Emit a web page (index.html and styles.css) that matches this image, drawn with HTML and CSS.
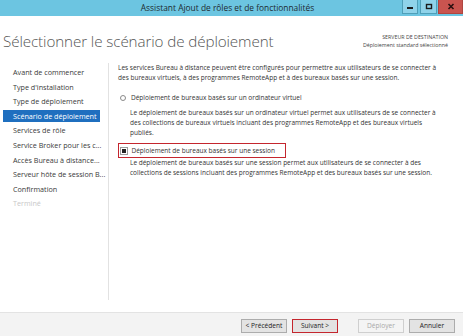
FILE: index.html
```html
<!DOCTYPE html>
<html lang="fr">
<head>
<meta charset="utf-8">
<title>Assistant Ajout de rôles et de fonctionnalités</title>
<link rel="stylesheet" href="styles.css">
</head>
<body>
<div class="window">
  <div class="titlebar">
    <div class="title">Assistant Ajout de rôles et de fonctionnalités</div>
    <div class="controls">
      <span class="ctl ctl-min"><svg width="8" height="6" viewBox="0 0 8 6"><rect x="1" y="3" width="6" height="2" fill="#1b1b1b"/></svg></span>
      <span class="ctl ctl-max"><svg width="8" height="7" viewBox="0 0 8 7"><rect x="1.5" y="1.5" width="5" height="4" fill="none" stroke="#1b1b1b" stroke-width="1.4"/></svg></span>
      <span class="ctl ctl-close"><svg width="8" height="7" viewBox="0 0 8 7"><path d="M1.5 1 L6.5 6 M6.5 1 L1.5 6" stroke="#2a1010" stroke-width="1.6"/></svg></span>
    </div>
  </div>

  <div class="header">
    <h1 class="heading">Sélectionner le scénario de déploiement</h1>
    <div class="dest">
      <div class="dest-title">SERVEUR DE DESTINATION</div>
      <div class="dest-name">Déploiement standard sélectionné</div>
    </div>
  </div>

  <div class="main">
    <ul class="nav">
      <li class="nav-item">Avant de commencer</li>
      <li class="nav-item">Type d'installation</li>
      <li class="nav-item">Type de déploiement</li>
      <li class="nav-item active">Scénario de déploiement</li>
      <li class="nav-item">Services de rôle</li>
      <li class="nav-item">Service Broker pour les c...</li>
      <li class="nav-item">Accès Bureau à distance...</li>
      <li class="nav-item">Serveur hôte de session B...</li>
      <li class="nav-item">Confirmation</li>
      <li class="nav-item disabled">Terminé</li>
    </ul>
    <div class="content">
      <p class="intro">Les services Bureau à distance peuvent être configurés pour permettre aux utilisateurs de se connecter à<br>des bureaux virtuels, à des programmes RemoteApp et à des bureaux basés sur une session.</p>

      <div class="option">
        <span class="radio"></span>
        <span class="option-label">Déploiement de bureaux basés sur un ordinateur virtuel</span>
      </div>
      <p class="desc desc-first">Le déploiement de bureaux basés sur un ordinateur virtuel permet aux utilisateurs de se connecter à<br>des collections de bureaux virtuels incluant des programmes RemoteApp et des bureaux virtuels<br>publiés.</p>

      <div class="option option-selected">
        <span class="radio radio-checked"></span>
        <span class="option-label">Déploiement de bureaux basés sur une session</span>
      </div>
      <p class="desc">Le déploiement de bureaux basés sur une session permet aux utilisateurs de se connecter à des<br>collections de sessions incluant des programmes RemoteApp et des bureaux basés sur une session.</p>
    </div>
  </div>

  <div class="footer">
    <button class="btn">&lt; Précédent</button>
    <button class="btn btn-next">Suivant &gt;</button>
    <button class="btn btn-disabled btn-deploy">Déployer</button>
    <button class="btn">Annuler</button>
  </div>
</div>
</body>
</html>
```

FILE: styles.css
```css
* { box-sizing: border-box; }

html, body {
  margin: 0;
  padding: 0;
  background: #ffffff;
}

body {
  width: 463px;
  height: 336px;
  overflow: hidden;
  font-family: "Open Sans", "Noto Sans", sans-serif;
  color: #3c3c3c;
}

.window {
  width: 463px;
  height: 336px;
  display: flex;
  flex-direction: column;
}

/* Title bar */
.titlebar {
  height: 16px;
  background: #6cc5e1;
  display: grid;
  grid-template-columns: 1fr auto 1fr;
  align-items: start;
  flex: none;
}
.title {
  grid-column: 2;
  font-size: 8.4px;
  line-height: 16px;
  color: #1e2a30;
  padding-right: 8px;
}
.controls {
  grid-column: 3;
  justify-self: end;
  display: flex;
  gap: 2px;
}
.ctl {
  height: 14px;
  display: flex;
  align-items: center;
  justify-content: center;
  background: #8fd3ea;
  border: 1px solid #4f9fb8;
  border-top: none;
}
.ctl-min { width: 16px; }
.ctl-max { width: 17px; }
.ctl-close {
  width: 25px;
  background: #c9544f;
  border-color: #b04540;
  margin-left: -1px;
}

/* Header */
.header {
  height: 47px;
  display: flex;
  justify-content: space-between;
  align-items: flex-start;
  flex: none;
}
.heading {
  margin: 0;
  padding: 15px 0 0 3px;
  font-size: 15.2px;
  font-weight: 300;
  line-height: 20px;
  color: #555555;
  letter-spacing: -0.1px;
}
.dest {
  padding: 17px 15px 0 0;
  text-align: right;
  font-size: 5.3px;
  line-height: 8px;
  color: #444;
}

/* Main */
.main {
  display: flex;
  height: 237px;
  flex: none;
}
.nav {
  list-style: none;
  margin: 0;
  padding: 3px 8px 0 3px;
  width: 109px;
  border-right: 1px solid #e2e2e2;
  display: flex;
  flex-direction: column;
  gap: 2.6px;
}
.nav-item {
  font-size: 7.2px;
  line-height: 12px;
  padding-left: 10px;
  color: #3a3a3a;
  white-space: nowrap;
}
.nav-item.active {
  background: #1f6fbf;
  color: #ffffff;
}
.nav-item.disabled {
  color: #c8c8c8;
}

.content {
  padding: 0 0 0 9px;
  font-size: 6.5px;
  line-height: 10px;
  color: #333;
}
.intro {
  margin: 0;
  padding-top: 0;
  white-space: nowrap;
}
.option {
  display: flex;
  align-items: center;
  gap: 5px;
  margin-top: 10px;
  height: 10px;
  padding-left: 2px;
  width: 168px;
}
.option-selected {
  margin-top: 5px;
  height: 15px;
  border: 1.5px solid #c4262e;
  padding-left: 1.5px;
}
.radio {
  width: 6px;
  height: 6px;
  border: 1px solid #8a8a8a;
  border-radius: 50%;
  flex: none;
}
.radio-checked {
  border-radius: 0;
  border: 1.5px solid #ffffff;
  background: #222;
  outline: 0.5px solid #9a9a9a;
}
.option-label {
  white-space: nowrap;
}
.desc {
  margin: 0;
  padding-left: 12px;
  white-space: nowrap;
}
.desc-first {
  margin-top: 5px;
}

/* Footer */
.footer {
  margin-top: 12px;
  flex: 1;
  border-top: 1px solid #e3e3e3;
  background: #f3f3f3;
  display: flex;
  justify-content: flex-end;
  align-items: flex-start;
  padding: 6px 8px 0 0;
  gap: 5px;
}
.btn {
  font-family: "Open Sans", "Noto Sans", sans-serif;
  font-size: 6.6px;
  height: 14px;
  width: 46px;
  padding: 0;
  background: #e3e3e3;
  border: 1px solid #acacac;
  color: #222;
  line-height: 12px;
}
.btn-next {
  border: 1.5px solid #c4262e;
}
.btn-deploy {
  margin-left: 15px;
}
.btn-disabled {
  background: #f4f4f4;
  border-color: #cfcfcf;
  color: #a8a8a8;
}
```
